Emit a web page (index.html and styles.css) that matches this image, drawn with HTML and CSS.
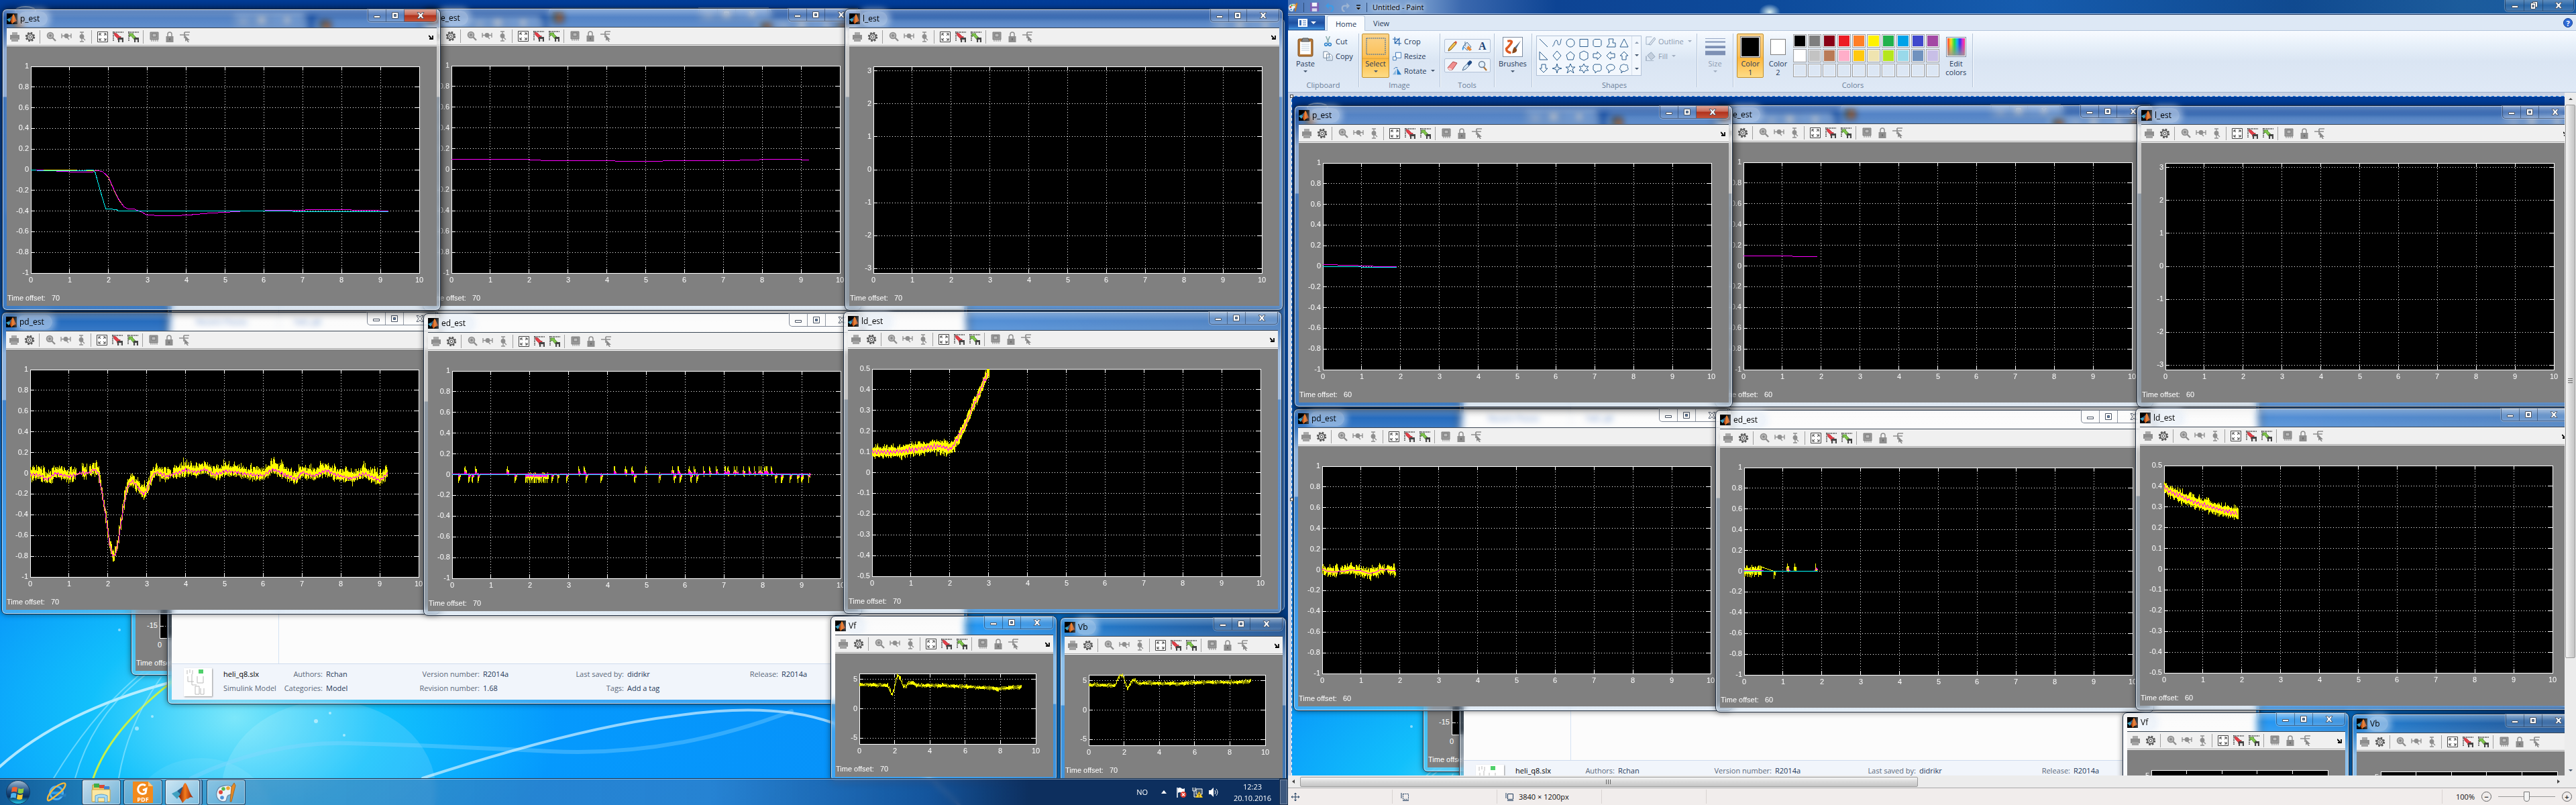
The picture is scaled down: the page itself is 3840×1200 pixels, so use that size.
FILE: index.html
```html
<!DOCTYPE html>
<html lang="en">
<head>
<meta charset="utf-8">
<title>Desktop</title>
<link rel="stylesheet" href="styles.css">
</head>
<body>
<svg class="defs" aria-hidden="true">
  <defs>
    <linearGradient id="g-flame" x1="0" x2="1"><stop offset="0" stop-color="#7a1500"/><stop offset=".45" stop-color="#f57c1c"/><stop offset="1" stop-color="#8c1a08"/></linearGradient>
    <linearGradient id="g-orb" x1="0" y1="0" x2="0" y2="1"><stop offset="0" stop-color="#a9bfd2"/><stop offset=".45" stop-color="#1d4f86"/><stop offset=".7" stop-color="#0a2f5c"/><stop offset="1" stop-color="#25d4f5"/></linearGradient>
    <linearGradient id="g-hue"><stop offset="0" stop-color="#f33"/><stop offset=".2" stop-color="#fd2"/><stop offset=".4" stop-color="#2d4"/><stop offset=".55" stop-color="#1be"/><stop offset=".72" stop-color="#33e"/><stop offset=".9" stop-color="#e3c"/><stop offset="1" stop-color="#e36"/></linearGradient>
    <linearGradient id="g-fade" x1="0" y1="0" x2="0" y2="1"><stop offset=".3" stop-color="#888" stop-opacity="0"/><stop offset="1" stop-color="#999" stop-opacity=".9"/></linearGradient>
  </defs>
  <symbol id="flame" viewBox="0 0 16 16"><path d="M0 9l4-2 3 2-3 4z" fill="#3fa0c0"/><path d="M4 7l4-3 2 2-3 4z" fill="#245a86"/><path d="M5 11c2 0 3-9 5-10 2 1 3 8 6 11-2-1-3 0-4 1-1-1-2 1-4 3-1-2-2-4-3-5z" fill="url(#g-flame)"/></symbol>
  <symbol id="matlab" viewBox="0 0 16 16"><rect width="16" height="16"/><use href="#flame"/></symbol>
  <symbol id="i-print" viewBox="0 0 16 16"><path d="M4 1h8v5H4z" fill="#a9a9a9"/><path d="M1 5h14v7H1z" fill="#8e8e8e"/><path d="M3 10h10v5H3z" fill="#a2a2a2"/></symbol>
  <symbol id="i-gear" viewBox="0 0 16 16"><circle cx="8" cy="8" r="6" fill="none" stroke="#555" stroke-width="2.4" stroke-dasharray="2.6 2.1"/><circle cx="8" cy="8" r="4.6" fill="#ddd" stroke="#555" stroke-width="1.6"/><circle cx="8" cy="8" r="1.9" fill="#fff" stroke="#444"/></symbol>
  <symbol id="i-zoom" viewBox="0 0 16 16"><path d="M10 9l5 5" stroke="#8e8e8e" stroke-width="2.4"/><circle cx="7" cy="6" r="4.5" fill="#b5b5b5" stroke="#8e8e8e" stroke-width="1.6"/><path d="M5 6h4M7 4v4" stroke="#777"/></symbol>
  <symbol id="i-zoomx" viewBox="0 0 16 16"><path d="M1 3v7M15 3v7M1 6.500h14M9 9l3 3" stroke="#8e8e8e" stroke-width="1.300"/><circle cx="8" cy="6.500" r="3.400" fill="#8e8e8e"/></symbol>
  <symbol id="i-zoomy" viewBox="0 0 16 16"><path d="M5 1h6M5 15h6M8 1v14M9 9l4 4" stroke="#8e8e8e" stroke-width="1.300"/><circle cx="8" cy="7.500" r="3.400" fill="#8e8e8e"/></symbol>
  <symbol id="i-fit" viewBox="0 0 16 16"><path d="M.5.500h15v15H.5z" fill="#fff" stroke="#444"/><path d="M3 6V3h3M10 3h3v3M3 10v3h3M13 10v3h-3M3 3l3 3M13 3l-3 3M3 13l3-3M13 13l-3-3" fill="none" stroke="#333"/></symbol>
  <symbol id="i-save" viewBox="0 0 16 16"><path d="M0 1h16M1 0v15" stroke="#333" stroke-width="1.500" stroke-dasharray="1.500 1"/><path d="M2 2l4 1 5 5 1-1v5H7l1-1-5-5z" fill="#e33f48" stroke="#9d1a22" stroke-width=".6"/><path d="M8 9h8v7H8z" fill="#444"/><path d="M10 12h4v4h-4z" fill="#ddd"/></symbol>
  <symbol id="i-load" viewBox="0 0 16 16"><path d="M0 1h16M1 0v15" stroke="#333" stroke-width="1.500" stroke-dasharray="1.500 1"/><path d="M2 3h6L7 4l5 5-3 3-5-6-2 2z" fill="#7fc54a" stroke="#3d7a1c" stroke-width=".7"/><path d="M9 9h7v7H9z" fill="#444"/><path d="M11 12h3v4h-3z" fill="#ddd"/></symbol>
  <symbol id="i-float" viewBox="0 0 16 16"><path d="M2 1h12v11H2z" fill="#999" stroke="#808080"/><path d="M5 3h6v5H5z" fill="#bbb" stroke="#777"/><path d="M4 12v3M7 12v3M10 12v3M13 12v3" stroke="#888"/></symbol>
  <symbol id="i-lock" viewBox="0 0 16 16"><path d="M5 8V4a3 3 0 0 1 6 0v4" fill="none" stroke="#8e8e8e" stroke-width="1.500"/><path d="M2.500 7h11v9h-11z" fill="#8e8e8e"/><path d="M8 10v3" stroke="#666" stroke-width="1.500"/></symbol>
  <symbol id="i-pick" viewBox="0 0 16 16"><path d="M0 5h14M7 1v9M7 1h8" stroke="#8e8e8e" stroke-width="1.700" fill="none"/><path d="M8 6l7 7-3 0 2 3-2 0-2-3-2 2z" fill="#8a8a8a"/></symbol>
  <symbol id="w-min" viewBox="0 0 12 12"><path d="M1.500 6.500h9v3h-9z" fill="#fff" stroke="#4a5464"/></symbol>
  <symbol id="w-max" viewBox="0 0 12 12"><path d="M1.500 1.500h9v9h-9z" fill="#fff" stroke="#4a5464"/><path d="M4.500 4.500h3v3h-3z" fill="#5a80b0" stroke="#4a5464"/></symbol>
  <symbol id="w-rest" viewBox="0 0 12 12"><path d="M4.500.500h7v8h-7z" fill="#fff" stroke="#4a5464"/><path d="M1.500 2.500h7v9h-7z" fill="#fff" stroke="#4a5464"/><path d="M4 5.500h2v3H4z" fill="#5a80b0" stroke="#4a5464"/></symbol>
  <symbol id="w-x" viewBox="0 0 12 12"><path d="M1 1.500h3l2 2.500 2-2.500h3L8 6l3 4.500H8L6 8l-2 2.500H1L4 6z" fill="#fff" stroke="#4a5464" stroke-width=".9"/></symbol>
  <symbol id="palette" viewBox="0 0 16 16"><path d="M7 3c5-1 7 2 6 5s-3 1-4 3 0 4-3 4S0 12 1 8s3-4.500 6-5z" fill="#e9f2fa" stroke="#6a8cab" stroke-width=".7"/><circle cx="4" cy="8" r="1.500" fill="#e0463c"/><circle cx="6" cy="5.500" r="1.400" fill="#57b84c"/><circle cx="9.500" cy="5" r="1.400" fill="#f0a52c"/><circle cx="5" cy="12" r="1.400" fill="#4b8fd6"/><path d="M14 1l1 2-3 12h-1l1-11z" fill="#e58a26" stroke="#9b5a15" stroke-width=".4"/></symbol>
</svg>

<main class="screens">
  <section class="monitor">
    <div class="scene" data-run="first" data-offset="70"></div>
    <footer class="taskbar">
      <button class="orb" aria-label="Start"><svg viewBox="0 0 36 36"><circle cx="18" cy="18" r="17.500" fill="url(#g-orb)" stroke="#173a5e"/><path d="M9 11q4-2 8 0l-1 7q-4-2-8 0z" fill="#f0622d"/><path d="M18.500 12q4 2 8 0l-1 7q-4 2-8 0z" fill="#8ccc3f"/><path d="M7.500 20q4-2 8 0l-1 7q-4-2-8 0z" fill="#4db2ec"/><path d="M17 21q4 2 8 0l-1 7q-4 2-8 0z" fill="#fbc92f"/></svg></button>
      <button class="task task-plain" aria-label="Internet Explorer"><svg viewBox="0 0 32 32"><circle cx="16" cy="17" r="9.500" fill="none" stroke="#1668b8" stroke-width="6"/><circle cx="16" cy="17" r="9.500" fill="none" stroke="#4fb4ee" stroke-width="3"/><path d="M8 17h17" stroke="#2f9de8" stroke-width="4"/><path d="M18 21h11v-3" stroke="#2a80bf" stroke-width="3" fill="none"/><path d="M29 3c2 4-4 11-12 17S3 31 3 27c-1-6 9-19 19-23 4-2 6-2 7-1z" fill="none" stroke="#f6b93b" stroke-width="2.400"/></svg></button>
      <button class="task task-open" aria-label="Windows Explorer"><svg viewBox="0 0 32 32"><path d="M3 5h10l2 3h13v22H3z" fill="#f3cf6c" stroke="#b98f2e"/><path d="M5 3h8v6H5z" fill="#3fae49"/><path d="M13 5h8v5h-8z" fill="#d84a35"/><path d="M20 7h8v5h-8z" fill="#3b84d6"/><path d="M2 12h27v18H2z" fill="#fbe7a2" stroke="#c9a444"/><path d="M7 31V21q9-4 18 0v10h-4v-7H11v7z" fill="#a9dcf5" stroke="#5b9fc9"/></svg></button>
      <button class="task" aria-label="Foxit PDF"><svg viewBox="0 0 32 32"><path d="M1 0h23l7 7v25H1z" fill="#f28a1c"/><path d="M24 0l7 7h-7z" fill="#ffc780"/><path d="M20 6a7 7 0 1 0 0 11l1-6-5 2" fill="none" stroke="#fff" stroke-width="3"/><text x="16" y="30" class="pdf">PDF</text></svg></button>
      <button class="task task-open task-stack" aria-label="MATLAB"><svg viewBox="0 0 16 16"><use href="#flame"/></svg></button>
      <button class="task" aria-label="Paint"><svg viewBox="0 0 16 16"><use href="#palette"/></svg></button>
      <div class="tray">
        <span>NO</span>
        <svg class="tri" viewBox="0 0 8 5"><path d="M4 0l4 5H0z" fill="#fff"/></svg>
        <svg class="tray-icon" viewBox="0 0 16 16"><path d="M2 1v15" stroke="#fff" stroke-width="1.500"/><path d="M3 2q3-2 5 0t5 0v7q-3 2-5 0t-5 0z" fill="#fff"/><circle cx="11" cy="11.500" r="4.500" fill="#dd3b2f"/><path d="M9 9.500l4 4m0-4l-4 4" stroke="#fff" stroke-width="1.300"/></svg>
        <svg class="tray-icon" viewBox="0 0 16 16"><path d="M1 1v5h4V1M3 6v9h4M6 3h9v8H6z" fill="#40566c" stroke="#fff"/><path d="M10.500 7L16 16H5z" fill="#ffd52e" stroke="#a87b00" stroke-width=".5"/><path d="M10.500 10v3m0 1v1" stroke="#222" stroke-width="1.200"/></svg>
        <svg class="tray-icon" viewBox="0 0 16 16"><path d="M1 5h3l4-4v14l-4-4H1z" fill="#fff"/><path d="M10 5q2 3 0 6M12 3q4 5 0 10" fill="none" stroke="#fff"/></svg>
        <time class="clock">12:23<br>20.10.2016</time>
      </div>
      <button class="peek" aria-label="Show desktop"></button>
    </footer>
  </section>

  <section class="paint">
    <header class="paint-title">
      <svg class="ic16" viewBox="0 0 16 16"><use href="#palette"/></svg>
      <i class="tsep"></i>
      <svg class="ic16" viewBox="0 0 16 16"><path d="M1 1h14v14H1z" fill="#7d5fb5"/><path d="M4 1h8v6H4z" fill="#f3f3fb"/><path d="M4 10h8v5H4z" fill="#d8d4ea"/></svg>
      <svg class="ic16" viewBox="0 0 16 16"><path d="M3 6h6q4 0 4 4t-4 5" fill="none" stroke="#3d9be6" stroke-width="2.600"/><path d="M6 1v10L1 6z" fill="#3d9be6"/></svg>
      <svg class="ic16" viewBox="0 0 16 16"><path d="M13 6H7q-4 0-4 4t4 5" fill="none" stroke="#9db4d2" stroke-width="2.600"/><path d="M10 1v10l5-5z" fill="#9db4d2"/></svg>
      <svg class="ic8" viewBox="0 0 8 8"><path d="M1 1h6" stroke="#111" stroke-width="1.500"/><path d="M0 4h8L4 8z" fill="#111" stroke="#fff" stroke-width=".4"/></svg>
      <i class="tsep"></i>
      <h1>Untitled - Paint</h1>
      <div class="wbtns wbtns-paint"><button class="wb" aria-label="Minimize"><svg><use href="#w-min"/></svg></button><button class="wb" aria-label="Restore"><svg><use href="#w-rest"/></svg></button><button class="wb wb-x" aria-label="Close"><svg><use href="#w-x"/></svg></button></div>
    </header>
    <nav class="tabs">
      <button class="filebtn" aria-label="Paint menu"><svg viewBox="0 0 28 14"><path d="M1 1h14v12H1z" fill="#fff"/><path d="M3 3h3v8H3z" fill="#3a6db5"/><path d="M8 4h5M8 7h5M8 10h5" stroke="#3a6db5"/><path d="M20 5h8l-4 4z" fill="#fff"/></svg></button>
      <button class="tab tab-on">Home</button>
      <button class="tab">View</button>
      <button class="help" aria-label="Help">?</button>
    </nav>
    <div class="ribbon">
      <div class="group g-clip">
        <div class="gbody">
          <button class="big"><span class="bigicon"><svg viewBox="0 0 24 30"><rect x="1" y="3" width="22" height="26" rx="2" fill="#b5793a" stroke="#7b4d1e"/><path d="M4 7h16v19H4z" fill="#fff"/><path d="M6 11h12M6 14h12M6 17h12M6 20h12" stroke="#bcd"/><path d="M8 2h8l2 5H6z" fill="#888" stroke="#555"/></svg></span>Paste<i class="arr"></i></button>
          <div class="col">
            <button class="small"><svg viewBox="0 0 16 16"><path d="M5 0l4 10M11 0L7 10" stroke="#8aa" stroke-width="1.600"/><circle cx="5" cy="13" r="2.200" fill="none" stroke="#2a7fc9" stroke-width="1.600"/><circle cx="11" cy="13" r="2.200" fill="none" stroke="#2a7fc9" stroke-width="1.600"/></svg>Cut</button>
            <button class="small"><svg viewBox="0 0 16 16"><path d="M1 1h6l3 3v7H1zM6 5h6l3 3v7H6z" fill="#fff" stroke="#6a7f98"/><path d="M8 9h5M8 11h5M8 13h5" stroke="#9bd"/></svg>Copy</button>
          </div>
        </div>
        <h2>Clipboard</h2>
      </div>
      <div class="group g-image">
        <div class="gbody">
          <button class="big big-on"><span class="bigicon bigsplit"><svg viewBox="0 0 30 26"><path d="M1 1h28v24H1z" fill="none" stroke="#1f5fa8" stroke-dasharray="2 1"/></svg></span>Select<i class="arr"></i></button>
          <div class="col">
            <button class="small"><svg viewBox="0 0 16 16"><path d="M4 0v12h12M0 4h12v12M4 12l9-10" fill="none" stroke="#1f5fa8" stroke-width="1.400"/></svg>Crop</button>
            <button class="small"><svg viewBox="0 0 16 16"><path d="M5.500 1.500h10v10h-10z" fill="#f4f9ff" stroke="#1f5fa8"/><path d="M.5 9.500h6v6h-6z" fill="#fff" stroke="#1f5fa8"/></svg>Resize</button>
            <button class="small"><svg viewBox="0 0 16 16"><path d="M0 15h6V6z" fill="#8cb8de"/><path d="M8 15h8L8 3z" fill="#2a7fc9"/><path d="M2 5q3-5 7-3" fill="none" stroke="#1f5fa8"/></svg>Rotate<i class="arr"></i></button>
          </div>
        </div>
        <h2>Image</h2>
      </div>
      <div class="group g-tools">
        <div class="gbody gtools">
          <div class="toolbox">
            <button aria-label="Pencil"><svg viewBox="0 0 16 16"><path d="M2 15l1-4 8-9 3 2-8 9z" fill="#f4c04d" stroke="#7b5a1e"/><path d="M11 2l3 2 1-2-2-2z" fill="#e0543c"/></svg></button>
            <button aria-label="Fill"><svg viewBox="0 0 16 16"><path d="M2 8l6-6 6 7-6 5z" fill="#dbe7f3" stroke="#4f6f92"/><path d="M5 8V1" stroke="#4f6f92"/><path d="M2 8q-2 3-1 6 2-1 2-4z" fill="#2a8be0"/><path d="M10 7l5 6-3 2-5-4z" fill="#e58a3a"/></svg></button>
            <button class="letter" aria-label="Text">A</button>
          </div>
          <div class="toolbox">
            <button aria-label="Eraser"><svg viewBox="0 0 16 16"><path d="M1 11l8-9 6 2-7 10H3z" fill="#f09090" stroke="#b04848"/><path d="M1 11l5 1 2 2H3z" fill="#fbdada"/></svg></button>
            <button aria-label="Color picker"><svg viewBox="0 0 16 16"><path d="M1 15l2-5 5-5 3 3-5 5z" fill="#cfe2f2" stroke="#4f6f92"/><path d="M8 4l4-4q4 1 3 4l-4 4z" fill="#204b86"/></svg></button>
            <button aria-label="Magnifier"><svg viewBox="0 0 16 16"><path d="M9 9l5 6" stroke="#b5793a" stroke-width="2.400"/><circle cx="7" cy="6" r="4.500" fill="#e4f1fc" stroke="#6a7f98" stroke-width="1.400"/></svg></button>
          </div>
        </div>
        <h2>Tools</h2>
      </div>
      <div class="group g-brush">
        <div class="gbody">
          <button class="big"><span class="bigicon"><svg class="framed" viewBox="0 0 30 30"><path d="M6 5q10-2 6 4t-8 9q0 6 8 7" fill="none" stroke="#dd5a22" stroke-width="4"/><path d="M29 4L17 17l3 3z" fill="#5d748c"/><path d="M18 15l4 4q1 6-8 7 1-8 4-11z" fill="#8a4a1c"/></svg></span>Brushes<i class="arr"></i></button>
        </div>
      </div>
      <div class="group g-shapes">
        <div class="gbody gshapes">
          <div class="shapebox">
            <div class="shapegrid" id="shapes"></div>
            <div class="shapescroll"><i class="arr arr-up"></i><i class="arr"></i><i class="arr"></i></div>
          </div>
          <div class="col">
            <button class="small" disabled><svg viewBox="0 0 16 16"><path d="M1 1h9M1 1v12h7" stroke="#9fb0c4" fill="none"/><path d="M5 13l9-11 2 2-8 10z" fill="#dde4ee" stroke="#8fa2b8"/></svg>Outline<i class="arr"></i></button>
            <button class="small" disabled><svg viewBox="0 0 16 16"><path d="M3 7l6-5 6 7-6 5z" fill="#c4cfdd" stroke="#8fa2b8"/><path d="M1 8v8h12" fill="none" stroke="#a9b7c9" stroke-width="2"/></svg>Fill<i class="arr"></i></button>
          </div>
        </div>
        <h2>Shapes</h2>
      </div>
      <div class="group g-size">
        <div class="gbody">
          <button class="big" disabled><span class="bigicon"><svg viewBox="0 0 32 30"><path d="M0 1h32v1H0zM0 6h32v2H0zM0 13h32v4H0zM0 21h32v7H0z" fill="#7d90b4"/></svg></span>Size<i class="arr"></i></button>
        </div>
      </div>
      <div class="group g-colors">
        <div class="gbody">
          <button class="big big-on"><span class="bigicon"><b class="sw sw-1"></b></span>Color<br>1</button>
          <button class="big"><span class="bigicon"><b class="sw sw-2"></b></span>Color<br>2</button>
          <div class="palette" id="palette-grid"></div>
          <button class="big big-edit"><span class="bigicon"><svg class="framed" viewBox="0 0 28 28"><rect width="28" height="28" fill="url(#g-hue)"/><rect width="28" height="28" fill="url(#g-fade)"/></svg></span>Edit<br>colors</button>
        </div>
        <h2>Colors</h2>
      </div>
    </div>
    <div class="workspace">
      <div class="viewport">
        <div class="scene" data-run="second" data-offset="60"></div>
        <i class="dash dash-top"></i><i class="dash dash-left"></i>
        <i class="handle handle-corner"></i><i class="handle handle-mid"></i>
      </div>
      <div class="vscroll"><i class="arr arr-up"></i><div class="vthumb"></div><i class="arr vdown"></i></div>
      <div class="hscroll"><i class="arr arr-left"></i><div class="hthumb"></div><i class="arr arr-right"></i></div>
    </div>
    <footer class="status">
      <div class="cell"><svg viewBox="0 0 12 12"><path d="M6 0v12M0 6h12M4.500 2L6 0l1.500 2M4.500 10L6 12l1.500-2M2 4.500L0 6l2 1.500M10 4.500L12 6l-2 1.500" fill="none" stroke="#1d3a5c"/></svg></div>
      <div class="cell"><svg viewBox="0 0 12 12"><path d="M3.500 1.500h8v8h-8z" fill="none" stroke="#1d3a5c" stroke-dasharray="2 1"/><path d="M1 0v8M3 11.500h9" stroke="#1d3a5c"/></svg></div>
      <div class="cell"><svg viewBox="0 0 12 12"><path d="M3.500 1.500h8v8h-8z" fill="none" stroke="#1d3a5c"/><path d="M1 0v8M3 11.500h9" stroke="#1d3a5c"/></svg>3840 × 1200px</div>
      <div class="cell"></div>
      <div class="zoom"><label for="zoom">100%</label><button class="round" aria-label="Zoom out">−</button><input id="zoom" type="range" min="0" max="100" value="50"><button class="round" aria-label="Zoom in">+</button></div>
    </footer>
  </section>
</main>
<script src="app.js"></script>
</body>
</html>
```
FILE: styles.css
```css
* { box-sizing: border-box; }
body { margin: 0; background: #0a4ea6; font: 11px/13px "Open Sans", "Noto Sans", sans-serif; color: #1e3858; }
button { font: inherit; color: inherit; background: none; border: 0; padding: 0; margin: 0; }
h1, h2 { font-size: 11px; font-weight: 400; margin: 0; }
svg { display: block; }
.defs { position: absolute; width: 0; height: 0; }

.screens { display: grid; grid-template-columns: 1fr 1fr; height: 100vh; min-height: 600px; }
.monitor { position: relative; overflow: hidden; }

/* Desktop scene: wallpaper with free-floating windows */
.scene {
  position: absolute; inset: 0; overflow: hidden;
  background:
    radial-gradient(ellipse 480px 330px at 350px 1070px, rgba(130,235,250,.95), rgba(20,200,252,.85) 45%, rgba(0,160,255,0)),
    radial-gradient(ellipse 560px 900px at 1990px 900px, rgba(2,40,100,.85), rgba(4,70,150,0)),
    radial-gradient(ellipse 1700px 560px at 600px 1100px, #049dff, rgba(8,145,252,.9) 60%, rgba(10,100,210,0)),
    linear-gradient(#003c98, #0a5cba 45%, #0a6cd0);
}
.viewport .scene { inset: 6px auto auto 6px; width: 1920px; height: 1200px; }
.wall { position: absolute; left: 0; top: 0; }
.bin { position: absolute; left: 22px; top: 9px; width: 32px; height: 14px; border: 2px solid rgba(190,205,220,.6); border-radius: 50%; }

.win {
  position: absolute; display: flex; flex-direction: column;
  padding: 0 5px 6px 6px; border: 1px solid #1d2c40; border-radius: 7px;
  background:
    linear-gradient(rgba(255,255,255,.4), rgba(255,255,255,.12) 13px, rgba(255,255,255,.2) 28px, rgba(255,255,255,.55) 60px, rgba(255,255,255,.55) 130px, rgba(170,200,230,.35) 131px);
  backdrop-filter: blur(5px);
  box-shadow: inset 0 0 0 1px rgba(255,255,255,.6), 0 0 8px rgba(0,0,0,.5);
}
.win-active { box-shadow: inset 0 0 0 1px rgba(255,255,255,.65), 0 1px 14px rgba(0,0,0,.9); }
.win-back { background: linear-gradient(rgba(150,195,245,.4), rgba(110,170,240,.45)); box-shadow: inset 0 0 0 1px rgba(255,255,255,.5); border-color: #1c4c8c; }
.win-title { display: flex; align-items: center; gap: 4px; height: 27px; flex: none; color: #000; font-size: 12px; }
.win-title > svg { width: 16px; height: 16px; flex: none; }
.win-title > span { padding: 0 12px 0 3px; margin-left: -3px; line-height: 22px; border-radius: 11px; background: rgba(225,236,248,.5); box-shadow: 0 0 9px 5px rgba(225,236,248,.45); }
.wbtns { display: flex; align-self: flex-start; margin-left: auto; border: 1px solid rgba(20,35,60,.55); border-top: 0; border-radius: 0 0 5px 5px; box-shadow: 0 0 0 1px rgba(255,255,255,.3); background: linear-gradient(rgba(255,255,255,.3), rgba(255,255,255,.08) 50%, rgba(255,255,255,.2)); }
.wb { display: grid; place-items: center; width: 27px; height: 18px; border-right: 1px solid rgba(20,35,60,.45); }
.wb svg { width: 12px; height: 12px; }
.wb-x { width: 47px; border-right: 0; border-radius: 0 0 4px 0; }
.win-active .wb-x { background: linear-gradient(#dca79b, #c96a58 45%, #b0301a 50%, #c4553c); }
.win-client { flex: 1; display: flex; flex-direction: column; min-height: 0; border: 1px solid #3a4654; border-width: 1px 0 0; background: #808080; overflow: hidden; }
.tools { display: flex; align-items: center; height: 27px; flex: none; background: #f0f0f0; border-bottom: 1px solid #fff; box-shadow: inset 0 -1px #a0a0a0; }
.tools button { display: grid; place-items: center; width: 23px; height: 24px; flex: none; }
.tools button svg { width: 16px; height: 16px; }
.tools i { width: 1px; height: 20px; margin: 0 4px 0 3px; background: #a0a0a0; flex: none; }
.tools .dock { margin-left: auto; width: 18px; }
.tools .dock svg { width: 7px; height: 7px; }
.plot { flex: 1; font: 11px "Liberation Sans", Arial, sans-serif; fill: #fff; overflow: hidden; }

/* File browser window behind the scopes */
.files { flex: 1; position: relative; background: #fcfcfc; }
.files-split { position: absolute; left: 159px; top: 0; bottom: 0; width: 1px; background: #d4e3f4; }
.files-hint { display: flex; gap: 70px; padding: 42px 0 0 36px; color: #5a86c8; font-size: 12px; }
.details { display: grid; grid-template-columns: 42px 106px 64px 134px 100px 123px 92px 170px 60px 100px; align-content: center; height: 54px; padding-left: 18px; background: #f1f5fb; border-top: 1px solid #cfdcee; line-height: 18px; }
.details svg { grid-row: span 2; width: 42px; height: 42px; background: #fff; box-shadow: 1px 1px 2px #999; align-self: center; }
.details span { color: #5a6779; text-align: right; padding-right: 5px; white-space: nowrap; }
.details span.kind { text-align: left; padding-left: 17px; padding-right: 0; }
.details b { font-weight: 400; white-space: nowrap; }
.details b.name { padding-left: 17px; color: #000; }

/* Taskbar */
.taskbar { position: absolute; left: 0; right: 0; bottom: 0; height: 40px; display: flex; align-items: center; gap: 4px; padding-left: 9px; border-top: 1px solid #14304f; box-shadow: inset 0 1px rgba(255,255,255,.45); background: linear-gradient(90deg, rgba(20,60,110,.7), rgba(60,115,170,.55) 12%, rgba(60,120,185,.6) 55%, rgba(25,65,125,.75) 72%, #0d2f5e 80%); backdrop-filter: blur(4px); color: #fff; }
.orb svg { width: 36px; height: 36px; }
.task { display: grid; place-items: center; width: 58px; height: 38px; border: 1px solid rgba(10,35,65,.8); border-radius: 3px; box-shadow: inset 0 0 0 1px rgba(255,255,255,.45); background: linear-gradient(135deg, rgba(255,255,255,.4), rgba(255,255,255,.12)); }
.task svg { width: 32px; height: 32px; }
.task-plain { width: 69px; border: 0; box-shadow: none; background: none; }
.task-open { background: linear-gradient(135deg, rgba(255,255,255,.75), rgba(255,255,255,.35)); }
.task-stack { width: 52px; margin-right: 6px; box-shadow: inset 0 0 0 1px rgba(255,255,255,.6), 3px 0 #6fa0c8, 4px 0 #12355c; }
.pdf { font: 700 9px "Open Sans", sans-serif; fill: #fff; text-anchor: middle; }
.tray { display: flex; align-items: center; gap: 8px; margin-left: auto; }
.tray > span { margin-right: 6px; }
.tray .tri { width: 8px; height: 5px; margin: 0 6px; }
.tray-icon { width: 16px; height: 16px; }
.clock { width: 84px; text-align: center; line-height: 17px; }
.peek { width: 13px; height: 39px; border: 1px solid #11294a; box-shadow: inset 0 0 0 1px rgba(255,255,255,.3); background: rgba(255,255,255,.2); margin-left: -6px; }

/* Paint */
.paint { display: flex; flex-direction: column; min-width: 0; background: #c8d1e3; }
.paint-title { display: flex; align-items: center; gap: 8px; height: 22px; flex: none; border-bottom: 1px solid #16305a; box-shadow: inset 0 -1px #9db8dc; background: radial-gradient(ellipse 16px 12px at 718px 18px, #d8eef0, rgba(200,225,240,0)), linear-gradient(90deg, #4a75b8, #7fa4d4 120px, #7ba0d0 190px, #3a68ae 260px, #0d4494 400px, #0d4a9a 700px, #165cae 1100px, #104a90 1500px, #1c5c9c 1750px, #185aa2); color: #000; }
.paint-title h1 { text-shadow: 0 0 6px #fff, 0 0 8px #fff; }
.ic16 { width: 15px; height: 15px; }
.ic8 { width: 8px; height: 8px; }
.tsep { width: 1px; height: 14px; background: #2c4a78; }
.wbtns-paint { margin-right: 3px; }
.wbtns-paint .wb { width: 28px; height: 16px; }
.wbtns-paint .wb-x { width: 45px; }
.tabs { display: flex; align-items: flex-end; height: 24px; flex: none; background: #dde8f5; box-shadow: inset 0 -1px #b4c6dc; }
.filebtn { width: 55px; height: 22px; display: grid; place-items: center; align-self: center; border: 1px solid #1d4a90; background: linear-gradient(#3f76c2, #1e4f9f 50%, #2c6cc0 80%, #4ba0e4); }
.filebtn svg { width: 28px; height: 14px; }
.tab { height: 23px; padding: 0 12px; }
.tab-on { margin-left: 3px; background: #fafcff; border: 1px solid #b4c6dc; border-bottom: 0; border-radius: 3px 3px 0 0; }
.help { margin: 0 5px 5px auto; width: 14px; height: 14px; border-radius: 50%; border: 1px solid #123f94; background: #2f6ad6; color: #fff; font-weight: 700; line-height: 11px; }
.ribbon { display: flex; height: 92px; flex: none; padding-top: 4px; border-bottom: 1px solid #9fb2cc; background: linear-gradient(#f8fbff, #e8f1fa 20px, #dae5f3 45px, #dfe9f6); }
.group { display: flex; flex-direction: column; align-items: center; height: 80px; position: relative; border-right: 1px solid #b6c5d9; box-shadow: 1px 0 #f5f9fd; padding: 0 4px; }
.group h2 { color: #6c7f99; margin-top: 4px; line-height: 13px; }
.gbody { display: flex; height: 66px; flex: none; align-self: stretch; }
.g-clip { width: 106px; }
.g-image { width: 121px; }
.g-tools { width: 81px; }
.g-brush { width: 56px; }
.g-shapes { width: 246px; }
.g-size { width: 54px; }
.g-colors { width: 357px; }
.big { display: flex; flex-direction: column; align-items: center; width: 41px; height: 66px; border: 1px solid transparent; border-radius: 2px; line-height: 13px; }
.big-on { border-color: #c2902c; background: linear-gradient(#fbd38a, #fbc15a 50%, #fdb73e 55%, #fddc86); }
.bigicon { display: grid; place-items: center; width: 100%; height: 37px; flex: none; }
.bigsplit { border-bottom: 1px solid #d9a441; }
.bigicon svg { width: 30px; height: 30px; }
.framed { background: #fff; border: 1px solid #7f8ea3; padding: 1px; }
.big:disabled, .small:disabled { color: #8d9bb0; }
.g-clip .big { width: 44px; margin-right: 2px; }
.g-brush .big, .g-size .big { width: 46px; }
.col { display: flex; flex-direction: column; }
.small { display: flex; align-items: center; gap: 4px; height: 22px; padding-left: 2px; }
.small svg { width: 15px; height: 15px; }
.g-image .small svg { width: 13px; margin-left: 3px; }
.arr { width: 0; height: 0; border: 3px solid transparent; border-top: 3px solid #44566e; border-bottom: 0; margin-top: 4px; }
.small .arr { margin: 0 0 0 2px; }
:disabled .arr { border-top-color: #a0adc0; }
.arr-up { border-top: 0; border-bottom: 3px solid #8d9bb0; }
.arr-left { border: 3px solid transparent; border-right: 4px solid #444; border-left: 0; margin: 0; }
.arr-right { border: 3px solid transparent; border-left: 4px solid #444; border-right: 0; margin: 0; }
.gtools { flex-direction: column; gap: 8px; padding: 8px 1px 0 2px; }
.toolbox { display: flex; justify-content: space-around; align-items: center; height: 21px; border: 1px solid #b3c2d7; border-radius: 2px; background: #eef4fb; }
.toolbox svg { width: 16px; height: 16px; }
.letter { width: 16px; font: 700 16px "Liberation Serif", serif; color: #1d4377; }
.gshapes { padding: 3px 0 0 2px; gap: 4px; }
.shapebox { display: flex; width: 157px; height: 60px; border: 1px solid #b3c2d7; background: #f2f7fd; }
.shapegrid { display: grid; grid-template-columns: repeat(7, 20px); grid-auto-rows: 19px; flex: 1; }
.shapegrid button { display: grid; place-items: center; }
.shapegrid svg { width: 16px; height: 16px; fill: #f4faff; stroke: #2c5c8c; stroke-width: 1; }
.shapescroll { display: flex; flex-direction: column; justify-content: space-around; align-items: center; width: 14px; border-left: 1px solid #d4deeb; }
.shapescroll .arr { margin: 0; }
.gshapes .col { margin-top: -3px; }
.sw { display: block; border: 1px solid #7f7f7f; box-shadow: inset 0 0 0 1px #fff; }
.sw-1 { width: 30px; height: 32px; background: #000; }
.sw-2 { width: 23px; height: 24px; background: #fff; }
.g-colors .gbody { padding-left: 1px; }
.g-colors .big + .big { margin-left: 1px; }
.palette { display: grid; grid-template-columns: repeat(10, 20px); grid-auto-rows: 20px; gap: 2px; margin: 1px 5px 0 2px; }
.palette button { border: 1px solid #a0a0a0; box-shadow: inset 0 0 0 1px #f3f6fb; }

.workspace { flex: 1; min-height: 0; display: grid; grid-template-columns: 1fr 17px; grid-template-rows: 1fr 18px; }
.viewport { position: relative; overflow: hidden; min-width: 0; }
.dash { position: absolute; }
.dash-top { left: 6px; right: 0; top: 5px; height: 1px; background: repeating-linear-gradient(90deg, #fff 0 4px, #2a86e8 4px 8px); }
.dash-left { left: 5px; top: 6px; bottom: 0; width: 1px; background: repeating-linear-gradient(#fff 0 4px, #2a86e8 4px 8px); }
.handle { position: absolute; left: 3px; width: 5px; height: 5px; background: #fff; border: 1px solid #444; }
.handle-corner { top: 3px; }
.handle-mid { top: 604px; }
.vscroll, .hscroll { display: flex; align-items: center; background: #ececec; }
.vscroll { flex-direction: column; padding: 8px 0 6px; }
.vscroll .arr { margin: 0; flex: none; border-bottom-color: #444; }
.vscroll .vdown { margin-top: auto; border-bottom-color: transparent; }
.vthumb { width: 15px; height: 76%; flex: 0 1 825px; margin-top: 7px; border: 1px solid #9a9a9a; border-radius: 2px; background: repeating-linear-gradient(#666 0 1px, transparent 1px 3px) center / 7px 9px no-repeat, linear-gradient(90deg, #f6f6f6, #d4d4d4 60%, #c4c4c4); }
.hscroll { grid-column: 1 / -1; padding: 0 24px 0 6px; }
.hthumb { width: 50%; max-width: 921px; flex: 1 1 auto; height: 15px; margin: 0 auto 0 8px; border: 1px solid #9a9a9a; border-radius: 2px; background: repeating-linear-gradient(90deg, #666 0 1px, transparent 1px 3px) center / 9px 7px no-repeat, linear-gradient(#f6f6f6, #d8d8d8 50%, #c6c6c6); }
.status { display: flex; height: 26px; flex: none; padding: 2px 6px 2px 0; background: #f1edec; border-top: 1px solid #a9a9a9; color: #111; }
.cell { display: flex; align-items: center; gap: 8px; width: 156px; padding-left: 5px; border-right: 1px solid #d8d3d1; }
.cell + .cell { padding-left: 12px; }
.cell svg { width: 12px; height: 12px; }
.zoom { display: flex; align-items: center; gap: 10px; margin-left: auto; padding-left: 20px; border-left: 1px solid #d8d3d1; }
.round { width: 15px; height: 15px; border: 1px solid #666; border-radius: 50%; line-height: 12px; text-align: center; color: #333; font-weight: 700; }
.zoom input { appearance: none; width: 85px; height: 16px; margin: 0; background: linear-gradient(#999, #999) center / 100% 1px no-repeat; }
.zoom input::-webkit-slider-thumb { appearance: none; width: 9px; height: 15px; background: #f4f4f4; border: 1px solid #777; border-radius: 1px 1px 5px 5px; }
```
FILE: app.js
```js
// Small seeded generator, so each run draws the same noise.
function noise(seed) {
  let s = seed;
  return () => ((s = (s * 1664525 + 1013904223) % 4294967296) / 4294967296);
}
function interp(pts, x) {
  for (let i = 1; i < pts.length; i++) {
    if (x <= pts[i][0]) {
      const [a, b] = [pts[i - 1], pts[i]];
      return a[1] + (b[1] - a[1]) * (x - a[0]) / (b[0] - a[0] || 1);
    }
  }
  return pts[pts.length - 1][1];
}
// Measured signal: jitter of random height around a mean curve.
function jitter(pts, end, up, down, seed, step = 0.017, gaps = []) {
  const r = noise(seed), out = [];
  let flip = 1;
  for (let x = 0; x <= end; x += step) {
    const quiet = gaps.some(g => x > g[0] && x < g[1]);
    const k = quiet ? 0.05 : 0.35 + 0.65 * r() * r() + 0.1 * r();
    out.push([x, interp(pts, x) + (flip > 0 ? up : -down) * k]);
    flip = -flip;
  }
  return out;
}
function spikes(list, end, h, seed) {
  const r = noise(seed), out = [[0, 0]];
  list.slice().sort((a, b) => Math.abs(a) - Math.abs(b)).forEach(v => {
    const x = Math.abs(v), d = v > 0 ? 1 : -1;
    out.push([x - 0.01, 0], [x, d * h], [x + 0.015, -d * h * 0.3 * r()], [x + 0.03, d * h * (0.3 + 0.4 * r())], [x + 0.045, 0]);
  });
  out.push([end, 0]);
  return out;
}

const Y = '#ff0', M = '#f0f', C = '#0ff';
const pd = [[0,-.01],[.25,-.02],[.45,-.06],[.65,0],[1,-.03],[1.3,0],[1.5,0],[1.65,.04],[1.75,.01],[1.82,-.12],[1.95,-.42],[2.05,-.7],[2.15,-.83],[2.25,-.7],[2.4,-.33],[2.5,-.13],[2.62,-.07],[2.75,-.12],[2.9,-.2],[3,-.17],[3.15,-.02],[3.25,.01],[3.5,-.03],[3.75,0],[4,.03],[4.3,.01],[4.5,.04],[4.75,-.02],[5,.02],[5.3,.01],[5.6,-.01],[6,-.02],[6.25,.04],[6.6,-.02],[6.85,-.06],[7,.01],[7.3,-.03],[7.6,.03],[7.9,-.02],[8.3,-.05],[8.6,0],[9,-.07],[9.2,0]];
const ld = [[0,.1],[.6,.1],[1.2,.115],[1.7,.13],[2,.115],[2.1,.13],[2.25,.18],[2.4,.23],[2.6,.32],[2.8,.4],[3.02,.5]];
const ld2 = [[0,.4],[.1,.38],[.5,.345],[1,.31],[1.5,.285],[1.9,.268]];
const dense = []; for (let x = 1.9; x < 2.45; x += .045) dense.push(-x);
const edMarks = [.33,.6,1.42,3.26,3.4,4.18,4.46,4.63,4.98,5.67,5.82,6.1,6.23,6.47,6.63,6.8,7.03,7.1,7.26,7.33,7.5,7.65,7.78,7.9,7.95,8.05,8.1,8.22,-.17,-.43,-.52,-.67,-1.62,-2.57,-2.72,-2.95,-3.45,-3.83,-4.7,-5.33,-5.72,-5.87,-6.15,-6.3,-8.33,-8.48,-8.7,-8.9,-9,-9.18].concat(dense);
const vf = [[0,4.1],[1.6,4],[1.75,3],[1.85,2.3],[1.95,3],[2.1,5.2],[2.2,5.7],[2.35,5],[2.5,3.7],[2.65,3.8],[2.8,4.3],[3,4.4],[3.3,4],[5,3.9],[7,3.6],[8,3.4],[9.2,3.8]];
const vb = [[0,4.3],[1.5,4.2],[1.7,5.6],[1.8,6],[1.95,6],[2.05,4.7],[2.2,3.6],[2.4,4.8],[2.6,5.2],[2.8,4.5],[3.2,4.6],[5,4.5],[7,4.8],[8.2,4.7],[9.2,5]];
const wob = (p, end, a, seed) => jitter(p, end, a, a, seed, .04);

const RUNS = {
  first: {
    p: [[Y, [[0,0],[1.75,-.01],[1.85,-.02],[2,-.075],[2.1,-.165],[2.25,-.285],[2.4,-.36]]],
        [M, [[0,0],[.5,-.01],[1,-.02],[1.6,-.02],[1.7,-.005],[1.85,-.02],[2,-.07],[2.1,-.16],[2.25,-.28],[2.4,-.36],[2.5,-.38],[2.65,-.38],[2.85,-.41],[3,-.44],[3.6,-.445],[4,-.44],[4.6,-.42],[5.1,-.41],[5.5,-.4],[6.2,-.395],[6.6,-.39],[8.1,-.388],[8.9,-.395],[9.2,-.4]]],
        [C, [[0,-.005],[.5,-.01],[1.4,-.012],[1.45,0],[1.6,0],[1.66,-.03],[1.8,-.22],[1.93,-.38],[2.2,-.385],[2.25,-.398],[6.7,-.398],[6.75,-.405],[9.2,-.405]]]],
    e: [[M, [[0,.1],[2,.1],[2.02,.092],[2.2,.09],[2.5,.082],[5,.08],[6.4,.082],[7.3,.086],[7.9,.092],[8,.1],[9,.1],[9.02,.092],[9.2,.092]]]],
    l: [],
    pd: [[Y, jitter(pd, 9.2, .13, .075, 7, .014, [[1.19,1.34],[1.47,1.54],[3.62,3.68]])], [M, wob(pd, 9.2, .02, 3)]],
    ed: [[Y, spikes(edMarks, 9.2, .08, 5)], [M, spikes(edMarks, 9.2, .03, 9).map(q => [q[0], q[1] + .005])], [C, [[0,0],[9.2,0]]]],
    ld: [[Y, jitter(ld, 3.02, .045, .045, 11, .01)], [M, wob(ld, 3, .014, 4)]],
    vf: [[Y, wob(vf, 9.2, .5, 21)]],
    vb: [[Y, wob(vb, 9.2, .45, 33)]]
  },
  second: {
    p: [[M, [[0,.015],[.6,.012],[1.3,0],[1.9,0]]], [C, [[0,-.005],[1.9,-.008]]]],
    e: [[M, [[0,.1],[1.2,.1],[1.3,.09],[1.9,.09]]]],
    l: [],
    pd: [[Y, jitter([[0,0],[.3,-.02],[.7,0],[1.2,-.03],[1.6,.01],[1.9,-.01]], 1.9, .08, .08, 13, .014, [[.1,.14],[.4,.46],[1.62,1.68]])], [M, [[0,.01],[.1,-.01],[.3,-.02],[.6,-.01],[.75,0],[1,-.01],[1.2,-.035],[1.4,-.02],[1.5,.005],[1.9,-.01]]]],
    ed: [[Y, jitter([[0,0],[.5,0]], .46, .075, .075, 2, .014).concat(spikes([-.77,1.11,1.3,1.84], 1.9, .075, 4).slice(1))], [M, [[0,.01],[.45,.01],[.5,.003],[1.1,.003],[1.13,.03],[1.18,.003],[1.8,.003],[1.86,.03],[1.9,.01]]], [C, [[0,0],[1.9,0]]]],
    ld: [[Y, jitter(ld2, 1.92, .045, .045, 17, .01)], [M, wob(ld2, 1.92, .012, 6)]],
    vf: [], vb: []
  }
};

const tenths = [1,.8,.6,.4,.2,0,-.2,-.4,-.6,-.8,-1];
const fifths = [.5,.4,.3,.2,.1,0,-.1,-.2,-.3,-.4,-.5];
const ones = [0,1,2,3,4,5,6,7,8,9,10];
const WINDOWS = [
  { title: '', x: 195, y: 560, w: 654, h: 447, max: 17, ys: [-15,0,15], xs: [0] },
  { files: true },
  { title: 'e_est', key: 'e', x: 630, y: 12, w: 654, h: 451, max: 1, ys: tenths, xs: ones },
  { title: 'pd_est', key: 'pd', x: 2, y: 465, w: 654, h: 451, max: 1, ys: tenths, xs: ones },
  { title: 'ed_est', key: 'ed', x: 631, y: 467, w: 654, h: 451, max: 1, ys: tenths, xs: ones },
  { title: 'l_est', key: 'l', x: 1259, y: 13, w: 654, h: 450, max: 3.14, ys: [3,2,1,0,-1,-2,-3], xs: ones },
  { title: 'ld_est', key: 'ld', x: 1257, y: 464, w: 654, h: 451, max: .5, ys: fifths, xs: ones },
  { title: 'Vf', key: 'vf', x: 1238, y: 918, w: 338, h: 247, max: 6, ys: [5,0,-5], xs: [0,2,4,6,8,10] },
  { title: 'Vb', key: 'vb', x: 1580, y: 920, w: 338, h: 247, max: 6, ys: [5,0,-5], xs: [0,2,4,6,8,10] },
  { title: 'p_est', key: 'p', x: 3, y: 13, w: 654, h: 450, max: 1, ys: tenths, xs: ones, active: true }
];
// Other open windows, seen only as blurred glass behind the scopes.
const BACK = [[1240, 27, 676, 884], [12, 20, 446, 300], [470, 24, 340, 300], [817, 11, 334, 300], [1127, 27, 110, 300]];

function plot(w, series, offset) {
  const W = w.w - 13, H = w.h - 63;
  const L = 36, T = 30, R = W - 26, B = H - 49;
  const px = v => L + (R - L) * v / 10;
  const py = v => T + (B - T) * (w.max - v) / (2 * w.max);
  const mid = v => Math.floor(v) + 0.5;
  let grid = '', tick = '', text = '';
  w.xs.forEach(v => {
    const x = mid(px(v));
    if (v > 0 && v < 10) { grid += `M${x} ${T}V${B}`; tick += `M${x} ${T}v6M${x} ${B}v-6`; }
    text += `<text x="${Math.round(px(v))}" y="${B + 14}" text-anchor="middle">${v}</text>`;
  });
  w.ys.forEach(v => {
    const y = mid(py(v));
    if (Math.abs(v) < w.max) { grid += `M${L} ${y}H${R}`; tick += `M${L} ${y}h6M${R} ${y}h-6`; }
    text += `<text x="${L - 3}" y="${Math.round(py(v)) + 3}" text-anchor="end">${v}</text>`;
  });
  const lines = series.map(([c, pts]) => `<path d="M${pts.map(q => px(q[0]).toFixed(1) + ' ' + Math.max(T, py(q[1])).toFixed(1)).join('L')}" fill="none" stroke="${c}" shape-rendering="crispEdges"/>`).join('');
  return `<svg class="plot" width="${W}" height="${H}"><rect x="${L}.5" y="${T}.5" width="${R - L}" height="${B - T}" fill="#000" stroke="#fff" shape-rendering="crispEdges"/>
    <path d="${grid}" stroke="#fff" stroke-dasharray="1 3" shape-rendering="crispEdges"/><path d="${tick}" stroke="#fff" shape-rendering="crispEdges"/>${lines}${text}
    <text x="1" y="${H - 8}">Time offset:</text><text x="67" y="${H - 8}">${offset}</text></svg>`;
}
const icon = (id, label) => `<button aria-label="${label}"><svg><use href="#i-${id}"/></svg></button>`;
const TOOLS = icon('print', 'Print') + icon('gear', 'Parameters') + '<i></i>' + icon('zoom', 'Zoom') + icon('zoomx', 'Zoom X') + icon('zoomy', 'Zoom Y') + '<i></i>' +
  icon('fit', 'Autoscale') + icon('save', 'Save axes') + icon('load', 'Restore axes') + '<i></i>' + icon('float', 'Floating scope') + icon('lock', 'Lock') + icon('pick', 'Select signal') +
  '<button class="dock" aria-label="Dock"><svg viewBox="0 0 7 7"><path d="M0 1l4 4M6 1v5H1" fill="none" stroke="#000" stroke-width="1.800"/></svg></button>';
const BUTTONS = '<div class="wbtns"><button class="wb" aria-label="Minimize"><svg><use href="#w-min"/></svg></button><button class="wb" aria-label="Maximize"><svg><use href="#w-max"/></svg></button><button class="wb wb-x" aria-label="Close"><svg><use href="#w-x"/></svg></button></div>';

function scopeWindow(w, run, offset) {
  return `<article class="win${w.active ? ' win-active' : ''}" style="left:${w.x}px;top:${w.y}px;width:${w.w}px;height:${w.h}px">
    <header class="win-title"><svg><use href="#matlab"/></svg><span>${w.title}</span>${BUTTONS}</header>
    <div class="win-client"><div class="tools">${TOOLS}</div>${plot(w, run[w.key] || [], offset)}</div></article>`;
}
const FILES = `<article class="win" style="left:249px;top:430px;width:1194px;height:620px"><div class="files"><div class="files-hint"><span>Recent Places</span><span>heli_q8</span></div><i class="files-split"></i></div>
  <div class="details"><svg viewBox="0 0 42 42"><path d="M22 2h7v6h-7z" fill="#4fd06a"/><path d="M5 3v6M9 2v5M13 3v6M6 12v8h9M12 9v16h7M20 12v10h9V12M17 27h6v12h-6zM25 30v9h5v-9" fill="none" stroke="#bbb"/></svg>
  <b class="name">heli_q8.slx</b><span>Authors:</span><b>Rchan</b><span>Version number:</span><b>R2014a</b><span>Last saved by:</span><b>didrikr</b><span>Release:</span><b>R2014a</b>
  <span class="kind">Simulink Model</span><span>Categories:</span><b>Model</b><span>Revision number:</span><b>1.68</b><span>Tags:</span><b>Add a tag</b></div></article>`;
const WALL = `<svg class="wall" width="1920" height="1200" fill="none" stroke-linecap="round">
  <ellipse cx="490" cy="1180" rx="160" ry="135" fill="#fff" fill-opacity=".13"/><ellipse cx="300" cy="1230" rx="110" ry="100" fill="#fff" fill-opacity=".08"/>
  <path d="M-5 1147Q100 1050 300 1006" stroke="#d8f6ff" stroke-width="4" opacity=".8"/><path d="M139 1160Q165 1085 262 1012" stroke="#c4f04a" stroke-width="3"/>
  <path d="M80 1160Q140 1060 215 1000M112 1160Q140 1060 225 1000M177 1160Q190 1080 240 1010" stroke="#9beaff" stroke-width="2" opacity=".6"/>
  <path d="M285 1160Q400 1105 520 1108T820 1120T1180 1060" stroke="#8ad8ff" stroke-width="6" opacity=".35"/>
  <path d="M630 1160Q860 1085 1000 1068Q1150 1045 1240 1077Q1340 1110 1430 1200" stroke="#e4f7ff" stroke-width="4" opacity=".65"/>
  <g fill="#fff" fill-opacity=".5"><circle cx="204" cy="1086" r="3"/><circle cx="227" cy="1068" r="2"/><circle cx="471" cy="1075" r="3"/><circle cx="492" cy="1063" r="2"/><circle cx="178" cy="939" r="2"/><circle cx="513" cy="1096" r="2"/></g></svg><i class="bin"></i>`;

document.querySelectorAll('.scene').forEach(el => {
  const run = RUNS[el.dataset.run], offset = el.dataset.offset;
  el.innerHTML = WALL +
    BACK.map(b => `<div class="win win-back" style="left:${b[0]}px;top:${b[1]}px;width:${b[2]}px;height:${b[3]}px"><header class="win-title"><svg><use href="#matlab"/></svg>${BUTTONS}</header></div>`).join('') +
    WINDOWS.map(w => w.files ? FILES : scopeWindow(w, run, offset)).join('');
});

const SHAPES = {
  Line: 'M2 2l12 12', Curve: 'M1 13c3 0 3-9 6-9s1 7 4 7 2-9 4-9', Oval: 'M8 2a6 6 0 1 0 .1 0z', Rectangle: 'M2 2.500h12v11H2z', 'Rounded rectangle': 'M4 2.500h8l2 2v7l-2 2H4l-2-2v-7z', Polygon: 'M5 2h7l-1 6h4v6H2l4-5z', Triangle: 'M8 2l6 12H2z',
  'Right triangle': 'M2 2l12 12H2z', Diamond: 'M8 1l6 7-6 7-6-7z', Pentagon: 'M8 2l6 5-2 7H4L2 7z', Hexagon: 'M8 1l6 3v8l-6 3-6-3V4z', 'Right arrow': 'M2 5h6V2l6 6-6 6v-3H2z', 'Left arrow': 'M14 5H8V2L2 8l6 6v-3h6z', 'Up arrow': 'M5 14V8H2l6-6 6 6h-3v6z',
  'Down arrow': 'M5 2v6H2l6 6 6-6h-3V2z', 'Four-point star': 'M8 1l1.500 5.500L15 8 9.500 9.500 8 15 6.500 9.500 1 8l5.500-1.500z', 'Five-point star': 'M8 1l2 5h5l-4 3 2 6-5-4-5 4 2-6-4-3h5z', 'Six-point star': 'M8 1l2 4h5l-3 3 3 3h-5l-2 4-2-4H1l3-3-3-3h5z', 'Rectangle callout': 'M4 2h8l2 2v6l-2 2H8l-3 3v-3H4l-2-2V4z', 'Oval callout': 'M8 2c8 0 8 9 0 9l-3 4v-4.500C-1 8 2 2 8 2z', 'Cloud callout': 'M5 3c2-2 4-1 5 0 3-1 4 1 3 3 2 3 1 5-2 5-1 2-4 2-5 1l-2 3v-4C1 10 1 8 3 6c-1-2 0-3 2-3z'
};
document.getElementById('shapes').innerHTML = Object.entries(SHAPES).map(([n, d]) => `<button aria-label="${n}"><svg viewBox="0 0 16 16"><path d="${d}"${/^(Line|Curve)$/.test(n) ? ' fill="none"' : ''}/></svg></button>`).join('');
const COLORS = ['#000','#7f7f7f','#880015','#ed1c24','#ff7f27','#fff200','#22b14c','#00a2e8','#3f48cc','#a349a4','#fff','#c3c3c3','#b97a57','#ffaec9','#ffc90e','#efe4b0','#b5e61d','#99d9ea','#7092be','#c8bfe7'];
document.getElementById('palette-grid').innerHTML = Array.from({ length: 30 }, (_, i) => `<button aria-label="Color ${i + 1}"${COLORS[i] ? ` style="background:${COLORS[i]}"` : ''}></button>`).join('');
```
